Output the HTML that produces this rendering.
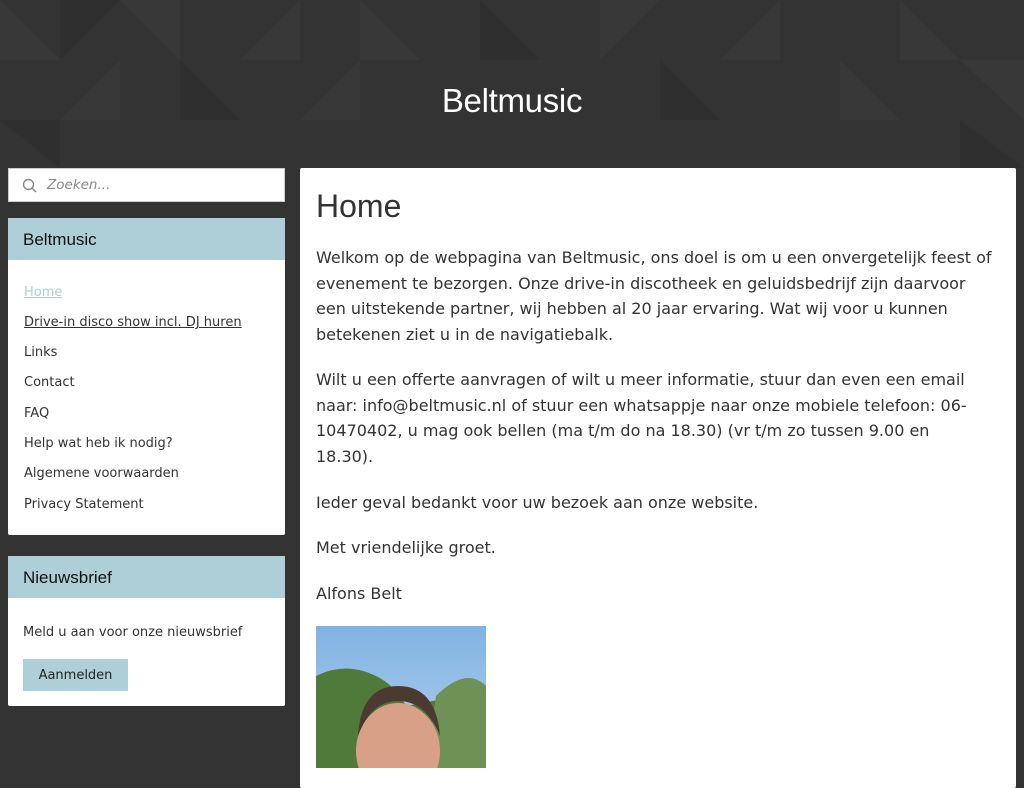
<!DOCTYPE html>
<html><head><meta charset="utf-8"><style>
*{margin:0;padding:0;box-sizing:border-box}
body{width:1024px;height:768px;overflow:hidden;background:#333;font-family:"DejaVu Sans",Verdana,sans-serif;color:#333;position:relative}
.bg{position:absolute;inset:0}
h1.site{position:absolute;top:82px;left:0;width:1024px;text-align:center;font:33px "Liberation Sans",Arial,sans-serif;color:#fff;letter-spacing:-0.3px}
.search{position:absolute;left:8px;top:168px;width:277px;height:34px;background:#fff;border:1px solid #ccc}
.search span{position:absolute;left:38px;top:8px;font-style:italic;font-size:13.5px;color:#888}
.box{position:absolute;left:8px;width:277px;background:#fff;border-radius:2px}
.box .hd{background:#aecfd8;height:42px;padding:12px 15px;font:17px "Liberation Sans",Arial,sans-serif;color:#111}
.nav a{display:block;position:absolute;left:16px;font-size:13px;color:#333;text-decoration:none;white-space:nowrap}
.main{position:absolute;left:300px;top:168px;width:716px;height:620px;background:#fff;border-radius:2px}
.main h2{position:absolute;left:16px;top:20px;font:normal 32px "Liberation Sans",Arial,sans-serif;color:#333}
.main p{position:absolute;left:16px;font-size:16px;line-height:25.5px;white-space:nowrap;color:#333}
.btn{position:absolute;left:15px;top:103px;width:105px;height:32px;background:#aecfd8;font-size:13px;color:#222;text-align:center;line-height:33px}
</style></head><body>
<svg class="bg" width="1024" height="768">
<rect width="1024" height="768" fill="#333"/>
<g fill="#383838">
<polygon points="0,0 60,60 0,60"/><polygon points="120,0 180,0 180,60"/><polygon points="240,60 300,0 300,60"/><polygon points="360,0 420,60 360,60"/><polygon points="600,0 660,0 600,60"/><polygon points="720,60 780,0 780,60"/><polygon points="900,0 960,60 900,60"/><polygon points="60,120 120,60 120,120"/><polygon points="300,120 360,60 360,120"/><polygon points="840,60 900,120 840,120"/><polygon points="960,60 1024,60 1024,120"/>
</g>
<g fill="#2f2f2f"><polygon points="60,0 120,0 60,60"/><polygon points="480,0 540,60 480,60"/><polygon points="180,60 240,120 180,120"/><polygon points="660,60 720,120 660,120"/><polygon points="0,120 60,120 60,168"/><polygon points="960,120 1024,168 960,168"/></g>
</svg>
<h1 class="site">Beltmusic</h1>
<div class="search"><svg style="position:absolute;left:13px;top:9px" width="15" height="15"><circle cx="6.5" cy="6.5" r="5" fill="none" stroke="#888" stroke-width="1.4"/><line x1="10" y1="10" x2="14" y2="14" stroke="#888" stroke-width="1.4"/></svg><span>Zoeken...</span></div>
<div class="box nav" style="top:218px;height:317px"><div class="hd">Beltmusic</div>
<a style="top:67px;color:#aecfd8;text-decoration:underline">Home</a>
<a style="top:97px;text-decoration:underline">Drive-in disco show incl. DJ huren</a>
<a style="top:127px">Links</a><a style="top:157px">Contact</a><a style="top:188px">FAQ</a>
<a style="top:218px">Help wat heb ik nodig?</a><a style="top:248px">Algemene voorwaarden</a><a style="top:279px">Privacy Statement</a>
</div>
<div class="box" style="top:556px;height:150px"><div class="hd">Nieuwsbrief</div>
<div style="position:absolute;left:15px;top:69px;font-size:13px">Meld u aan voor onze nieuwsbrief</div>
<div class="btn">Aanmelden</div></div>
<div class="main">
<h2>Home</h2>
<p style="top:77px">Welkom op de webpagina van Beltmusic, ons doel is om u een onvergetelijk feest of<br>evenement te bezorgen. Onze drive-in discotheek en geluidsbedrijf zijn daarvoor<br>een uitstekende partner, wij hebben al 20 jaar ervaring. Wat wij voor u kunnen<br>betekenen ziet u in de navigatiebalk.</p>
<p style="top:199px">Wilt u een offerte aanvragen of wilt u meer informatie, stuur dan even een email<br>naar: info@beltmusic.nl of stuur een whatsappje naar onze mobiele telefoon: 06-<br>10470402, u mag ook bellen (ma t/m do na 18.30) (vr t/m zo tussen 9.00 en<br>18.30).</p>
<p style="top:322px">Ieder geval bedankt voor uw bezoek aan onze website.</p>
<p style="top:367px">Met vriendelijke groet.</p>
<p style="top:413px">Alfons Belt</p>
<svg style="position:absolute;left:16px;top:458px" width="170" height="142">
<defs><linearGradient id="s" x1="0" y1="0" x2="0" y2="1"><stop offset="0" stop-color="#7fb2e3"/><stop offset="1" stop-color="#b7d3ec"/></linearGradient></defs>
<rect width="170" height="142" fill="url(#s)"/>
<path d="M0,50 Q30,35 60,50 Q80,60 90,80 L170,65 L170,142 L0,142Z" fill="#4f7a3a"/>
<path d="M120,70 Q150,40 170,60 L170,142 L110,142Z" fill="#6e9256"/>
<ellipse cx="82" cy="125" rx="42" ry="48" fill="#d9a088"/>
<path d="M42,110 Q45,60 82,60 Q120,60 124,110 Q110,75 82,75 Q55,75 42,110Z" fill="#4a3a30"/>
</svg>
</div>
</body></html>
